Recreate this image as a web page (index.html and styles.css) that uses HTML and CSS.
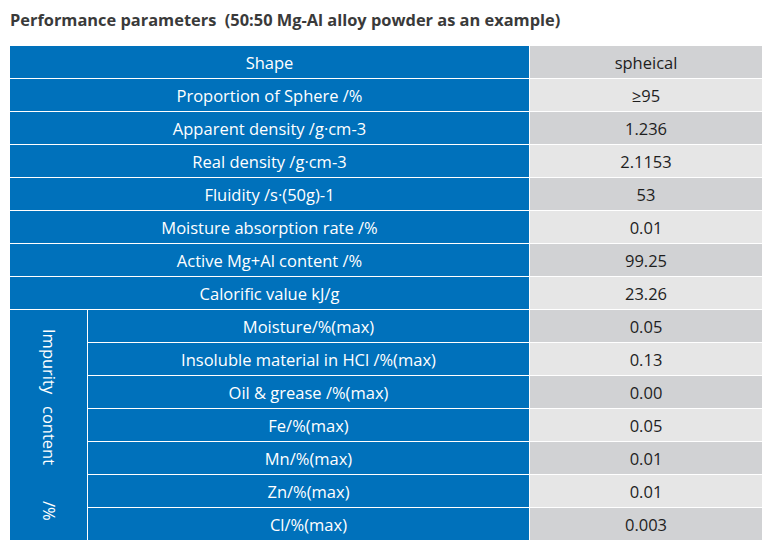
FILE: index.html
```html
<!DOCTYPE html>
<html>
<head>
<meta charset="utf-8">
<link rel="stylesheet" href="styles.css">
</head>
<body>
<h1 class="title">Performance parameters&nbsp; (50:50 Mg-Al alloy powder as an example)</h1>
<div class="grid">
  <div class="k span2">Shape</div><div class="v dark">spheical</div>
  <div class="k span2">Proportion of Sphere /%</div><div class="v light">≥95</div>
  <div class="k span2">Apparent density /g·cm-3</div><div class="v dark">1.236</div>
  <div class="k span2">Real density /g·cm-3</div><div class="v light">2.1153</div>
  <div class="k span2">Fluidity /s·(50g)-1</div><div class="v dark">53</div>
  <div class="k span2">Moisture absorption rate /%</div><div class="v light">0.01</div>
  <div class="k span2">Active Mg+Al content /%</div><div class="v dark">99.25</div>
  <div class="k span2">Calorific value kJ/g</div><div class="v light">23.26</div>
  <div class="k group">
    <span class="vt w1">Impurity</span>
    <span class="vt w2">content</span>
    <span class="vt w3">/%</span>
  </div>
  <div class="k">Moisture/%(max)</div><div class="v dark">0.05</div>
  <div class="k">Insoluble material in HCl /%(max)</div><div class="v light">0.13</div>
  <div class="k">Oil &amp; grease /%(max)</div><div class="v dark">0.00</div>
  <div class="k">Fe/%(max)</div><div class="v light">0.05</div>
  <div class="k">Mn/%(max)</div><div class="v dark">0.01</div>
  <div class="k">Zn/%(max)</div><div class="v light">0.01</div>
  <div class="k">Cl/%(max)</div><div class="v dark">0.003</div>
</div>
</body>
</html>
```
FILE: styles.css
```css
body {
  margin: 0;
  background: #fff;
  font-family: "Open Sans", "Noto Sans", sans-serif;
}
.title {
  margin: 0;
  padding: 9px 0 0 10px;
  height: 46px;
  box-sizing: border-box;
  font-size: 16.4px;
  line-height: 22px;
  font-weight: 700;
  color: #3a3a3a;
}
.grid {
  margin-left: 10px;
  width: 752px;
  display: grid;
  grid-template-columns: 77px 441px 232px;
  grid-auto-rows: 32px;
  gap: 1px;
  background: #fff;
}
.k, .v {
  display: flex;
  align-items: center;
  justify-content: center;
  font-size: 16.5px;
}
.k {
  background: #0071bb;
  color: #fff;
}
.span2 { grid-column: 1 / 3; }
.v { color: #1e1e1e; }
.dark { background: #d1d2d4; }
.light { background: #e6e6e6; }
.group {
  grid-row: 9 / 16;
  grid-column: 1;
  flex-direction: column;
  justify-content: center;
}
.vt {
  writing-mode: vertical-rl;
  line-height: 20px;
}
.w1 { margin-bottom: 12px; }
.w2 { margin-bottom: 36px; }
```
